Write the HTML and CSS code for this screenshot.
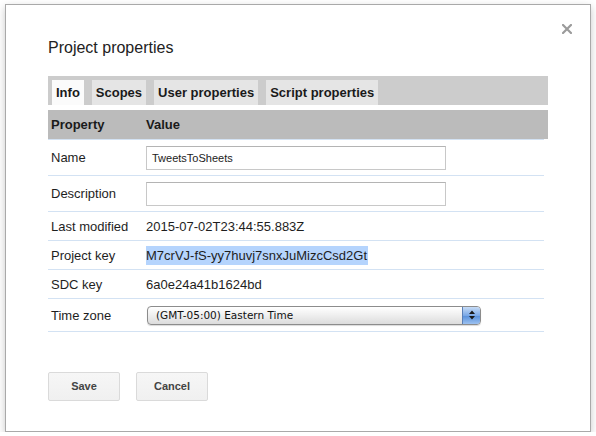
FILE: index.html
```html
<!DOCTYPE html>
<html>
<head>
<meta charset="utf-8">
<link rel="stylesheet" href="styles.css">
</head>
<body>
<div class="dialog">
  <svg class="close" width="10" height="10" viewBox="0 0 10 10"><path d="M1 1L9 9M9 1L1 9" stroke="#9b9b9b" stroke-width="2.2" stroke-linecap="square"/></svg>
  <h1 class="title">Project properties</h1>
  <div class="tabs">
    <div class="tab active">Info</div>
    <div class="tab">Scopes</div>
    <div class="tab">User properties</div>
    <div class="tab">Script properties</div>
  </div>
  <div class="thead">
    <div class="lbl">Property</div>
    <div class="val">Value</div>
  </div>
  <div class="rows">
    <div class="row tall">
      <div class="lbl">Name</div>
      <div class="val"><div class="input">TweetsToSheets</div></div>
    </div>
    <div class="row tall">
      <div class="lbl">Description</div>
      <div class="val"><div class="input"></div></div>
    </div>
    <div class="row">
      <div class="lbl">Last modified</div>
      <div class="val">2015-07-02T23:44:55.883Z</div>
    </div>
    <div class="row">
      <div class="lbl">Project key</div>
      <div class="val"><span class="sel">M7crVJ-fS-yy7huvj7snxJuMizcCsd2Gt</span></div>
    </div>
    <div class="row">
      <div class="lbl">SDC key</div>
      <div class="val">6a0e24a41b1624bd</div>
    </div>
    <div class="row tz">
      <div class="lbl">Time zone</div>
      <div class="val">
        <div class="select"><span class="seltext">(GMT-05:00) Eastern Time</span><span class="arrows"><svg width="8" height="12" viewBox="0 0 8 12"><path d="M4 1.5L7 5H1Z M4 10.5L7 7H1Z" fill="#1a1a1a"/></svg></span></div>
      </div>
    </div>
  </div>
  <div class="buttons">
    <div class="btn">Save</div>
    <div class="btn">Cancel</div>
  </div>
</div>
</body>
</html>
```
FILE: styles.css
```css
html, body {
  margin: 0;
  padding: 0;
  background: #ffffff;
}
body {
  font-family: "Liberation Sans", Arial, sans-serif;
  color: #1e1e1e;
}
.dialog {
  position: relative;
  box-sizing: border-box;
  width: 586px;
  height: 428px;
  margin: 4px 0 0 5px;
  border: 1px solid #a9a9a9;
  background: #fff;
  box-shadow: 0 3px 8px rgba(0,0,0,0.22);
  padding: 33px 0 0 42px;
}
.close {
  position: absolute;
  right: 18px;
  top: 19px;
}
.title {
  margin: 0;
  font-size: 16px;
  line-height: 20px;
  font-weight: normal;
  color: #222;
}
.tabs {
  margin-top: 18px;
  box-sizing: border-box;
  width: 500px;
  height: 29px;
  background: #cccccc;
  padding: 4px 0 0 4px;
  display: flex;
  gap: 8px;
}
.tab {
  height: 25px;
  line-height: 25px;
  padding: 0 4px;
  font-size: 13px;
  font-weight: bold;
  background: #e5e5e5;
  color: #1a1a1a;
}
.tab.active {
  background: #fbfbfb;
  margin-right: 0;
}
.thead {
  margin-top: 5px;
  width: 500px;
  height: 29px;
  background: #bbbbbb;
  display: flex;
  align-items: center;
  font-size: 13px;
  font-weight: bold;
  color: #1a1a1a;
}
.lbl {
  box-sizing: border-box;
  width: 98px;
  padding-left: 3px;
  flex: none;
}
.rows {
  width: 496px;
  border-top: 1px solid #d3e2f3;
}
.row {
  display: flex;
  align-items: center;
  height: 28px;
  border-bottom: 1px solid #d3e2f3;
  font-size: 13px;
  color: #1e1e1e;
}
.row.tall {
  height: 35px;
}
.row.tz {
  height: 32px;
}
.input {
  box-sizing: border-box;
  width: 300px;
  height: 24px;
  border: 1px solid #c8c8c8;
  border-top-color: #b4b4b4;
  padding-left: 5px;
  font-size: 11px;
  line-height: 22px;
  color: #222;
}
.sel {
  display: inline-block;
  background: #b5d4fd;
  line-height: 19px;
  padding-right: 1px;
}
.select {
  box-sizing: border-box;
  width: 334px;
  height: 19px;
  margin-left: 1px;
  border: 1px solid #8c8c8c;
  border-radius: 4px;
  background: linear-gradient(#ffffff, #f0f0f0 45%, #dcdcdc);
  display: flex;
  align-items: center;
  overflow: hidden;
  font-family: "DejaVu Sans", sans-serif;
  font-size: 10.5px;
  color: #111;
  box-shadow: 0 1px 1px rgba(0,0,0,0.15);
}
.seltext {
  flex: 1;
  padding-left: 8px;
}
.arrows {
  width: 17px;
  height: 17px;
  background: linear-gradient(#c7dcf6, #7aa8e6 50%, #5c93dc 55%, #9cc1f0);
  border-left: 1px solid #5a7fb6;
  display: flex;
  align-items: center;
  justify-content: center;
}
.buttons {
  margin-top: 40px;
  display: flex;
  gap: 16px;
}
.btn {
  box-sizing: border-box;
  width: 72px;
  height: 29px;
  border: 1px solid #dadada;
  border-radius: 2px;
  background: linear-gradient(#f6f6f6, #f0f0f0);
  text-align: center;
  line-height: 27px;
  font-size: 11px;
  font-weight: bold;
  color: #444;
}
```
